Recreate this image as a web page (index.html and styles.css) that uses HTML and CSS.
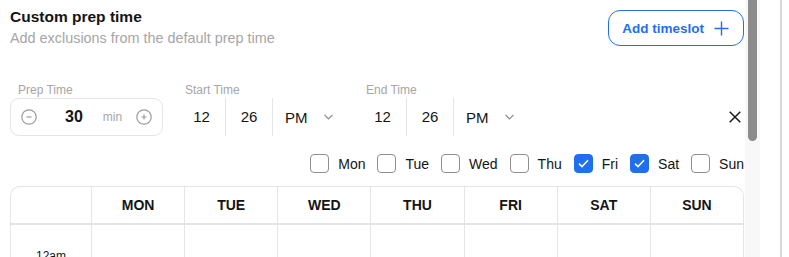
FILE: index.html
```html
<!DOCTYPE html>
<html lang="en">
<head>
    <meta charset="UTF-8">
    <title>Custom prep time</title>
    <link rel="stylesheet" href="styles.css">
</head>
<body>
    <div class="window">
        <main class="panel">
            <header class="panel-head">
                <div>
                    <h2 class="title">Custom prep time</h2>
                    <p class="subtitle">Add exclusions from the default prep time</p>
                </div>
                <button class="btn-add">Add timeslot
                    <svg width="15" height="15" viewBox="0 0 15 15"><path d="M7.5 0.5v14M0.5 7.5h14" stroke="currentColor" stroke-width="1.4" fill="none"/></svg>
                </button>
            </header>

            <div class="slot">
                <div class="field">
                    <label class="field-label">Prep Time</label>
                    <div class="stepper">
                        <svg class="step-icon" width="16" height="16" viewBox="0 0 16 16"><circle cx="8" cy="8" r="7.2" stroke="#9b9b9b" stroke-width="1.2" fill="none"/><path d="M5.5 8h5" stroke="#9b9b9b" stroke-width="1.2"/></svg>
                        <span class="stepper-value">30</span>
                        <span class="stepper-unit">min</span>
                        <svg class="step-icon step-plus" width="16" height="16" viewBox="0 0 16 16"><circle cx="8" cy="8" r="7.2" stroke="#9b9b9b" stroke-width="1.2" fill="none"/><path d="M5.5 8h5M8 5.5v5" stroke="#9b9b9b" stroke-width="1.2"/></svg>
                    </div>
                </div>

                <div class="field field-time">
                    <label class="field-label">Start Time</label>
                    <div class="time">
                        <span class="time-cell">12</span>
                        <span class="time-cell">26</span>
                        <span class="time-ampm">PM
                            <svg width="9" height="6" viewBox="0 0 9 6"><path d="M0.5 0.8l4 4 4-4" stroke="#8a8a8a" stroke-width="1.2" fill="none"/></svg>
                        </span>
                    </div>
                </div>

                <div class="field field-time">
                    <label class="field-label">End Time</label>
                    <div class="time">
                        <span class="time-cell">12</span>
                        <span class="time-cell">26</span>
                        <span class="time-ampm">PM
                            <svg width="9" height="6" viewBox="0 0 9 6"><path d="M0.5 0.8l4 4 4-4" stroke="#8a8a8a" stroke-width="1.2" fill="none"/></svg>
                        </span>
                    </div>
                </div>

                <button class="btn-close">
                    <svg width="12" height="12" viewBox="0 0 12 12"><path d="M0.7 0.7l10.6 10.6M11.3 0.7L0.7 11.3" stroke="#1a1a1a" stroke-width="1.5"/></svg>
                </button>
            </div>

            <div class="days">
                <label class="day"><span class="check"></span>Mon</label>
                <label class="day"><span class="check"></span>Tue</label>
                <label class="day"><span class="check"></span>Wed</label>
                <label class="day"><span class="check"></span>Thu</label>
                <label class="day"><span class="check checked"><svg width="11" height="9" viewBox="0 0 11 9"><path d="M1 4.6l3 3 6-6.4" stroke="#fff" stroke-width="1.5" fill="none"/></svg></span>Fri</label>
                <label class="day"><span class="check checked"><svg width="11" height="9" viewBox="0 0 11 9"><path d="M1 4.6l3 3 6-6.4" stroke="#fff" stroke-width="1.5" fill="none"/></svg></span>Sat</label>
                <label class="day"><span class="check"></span>Sun</label>
            </div>

            <div class="calendar">
                <div class="cal-head"></div>
                <div class="cal-head">MON</div>
                <div class="cal-head">TUE</div>
                <div class="cal-head">WED</div>
                <div class="cal-head">THU</div>
                <div class="cal-head">FRI</div>
                <div class="cal-head">SAT</div>
                <div class="cal-head">SUN</div>

                <div class="cal-time">12am</div>
                <div class="cal-cell"></div>
                <div class="cal-cell"></div>
                <div class="cal-cell"></div>
                <div class="cal-cell"></div>
                <div class="cal-cell"></div>
                <div class="cal-cell"></div>
                <div class="cal-cell"></div>
            </div>
        </main>
        <div class="scrollbar"><div class="thumb"></div></div>
        <div class="gutter"></div>
        <div class="edge"></div>
    </div>
</body>
</html>
```

FILE: styles.css
```css
:root {
    --blue: #1f6fee;
    --text: #141414;
    --muted: #a6a6a6;
    --line: #e5e5e5;
}
* {
    margin: 0;
    padding: 0;
    box-sizing: border-box;
}
body {
    font-family: 'Liberation Sans', Arial, sans-serif;
    color: var(--text);
    background: #fff;
    height: 257px;
    overflow: hidden;
}
.window {
    display: flex;
    height: 257px;
}
.panel {
    width: 745px;
    flex: none;
    padding: 0 1px 0 10px;
    overflow: hidden;
}
.panel-head {
    display: flex;
    justify-content: space-between;
    align-items: flex-start;
    padding-top: 7px;
}
.title {
    font-size: 15.5px;
    line-height: 20px;
    font-weight: 700;
}
.subtitle {
    margin-top: 2px;
    font-size: 14.4px;
    line-height: 18px;
    color: var(--muted);
}
.btn-add {
    margin-top: 3px;
    height: 36px;
    display: flex;
    align-items: center;
    gap: 10px;
    padding: 0 14px 0 13px;
    border: 1px solid var(--blue);
    border-radius: 12px;
    background: #fff;
    color: var(--blue);
    font-family: inherit;
    font-size: 13.5px;
    font-weight: 700;
}
.slot {
    display: flex;
    align-items: flex-end;
    gap: 15px;
    margin-top: 36px;
}
.field-label {
    display: block;
    padding-left: 8px;
    margin-bottom: 1px;
    font-size: 12px;
    line-height: 14px;
    color: var(--muted);
}
.field-time .field-label {
    padding-left: 7px;
}
.stepper {
    width: 153px;
    height: 38px;
    display: flex;
    align-items: center;
    padding: 0 10px;
    border: 1px solid var(--line);
    border-radius: 9px;
}
.stepper-value {
    margin-left: 28px;
    font-size: 16px;
    font-weight: 700;
}
.stepper-unit {
    margin-left: 20px;
    font-size: 12px;
    color: var(--muted);
}
.step-plus {
    margin-left: auto;
}
.time {
    display: flex;
    height: 38px;
    font-size: 15px;
}
.time-cell {
    width: 47px;
    line-height: 38px;
    text-align: center;
}
.time-cell + .time-cell,
.time-ampm {
    border-left: 1px solid var(--line);
}
.time-ampm {
    width: 72px;
    display: flex;
    align-items: center;
    gap: 16px;
    padding-left: 12px;
}
.btn-close {
    margin-left: auto;
    margin-bottom: 9px;
    width: 18px;
    height: 20px;
    display: flex;
    align-items: center;
    justify-content: center;
    border: none;
    background: none;
}
.days {
    display: flex;
    justify-content: flex-end;
    gap: 12px;
    margin-top: 18px;
    font-size: 14px;
}
.day {
    display: flex;
    align-items: center;
    gap: 9px;
    height: 19px;
}
.check {
    width: 19px;
    height: 19px;
    border: 1px solid #8f8f8f;
    border-radius: 4px;
    display: flex;
    align-items: center;
    justify-content: center;
}
.check.checked {
    background: var(--blue);
    border-color: var(--blue);
}
.calendar {
    display: grid;
    grid-template-columns: 80px repeat(7, 1fr);
    margin-top: 13px;
    border: 1px solid var(--line);
    border-bottom: none;
    border-radius: 10px 10px 0 0;
}
.cal-head {
    height: 38px;
    line-height: 36px;
    text-align: center;
    font-size: 14px;
    font-weight: 700;
    border-bottom: 2px solid var(--line);
}
.cal-head + .cal-head,
.cal-cell {
    border-left: 1px solid var(--line);
}
.cal-time,
.cal-cell {
    height: 60px;
    border-bottom: 1px solid var(--line);
}
.cal-time {
    padding-top: 24px;
    text-align: center;
    font-size: 12px;
    line-height: 14px;
}
.scrollbar {
    width: 15px;
    flex: none;
    background: #f8f8f8;
}
.thumb {
    width: 9px;
    height: 141px;
    margin-left: 3px;
    background: #8c8c8c;
    border-radius: 0 0 5px 5px;
}
.gutter {
    width: 20px;
    flex: none;
}
.edge {
    flex: 1;
    border-left: 2px solid #d9d9d9;
}
```
